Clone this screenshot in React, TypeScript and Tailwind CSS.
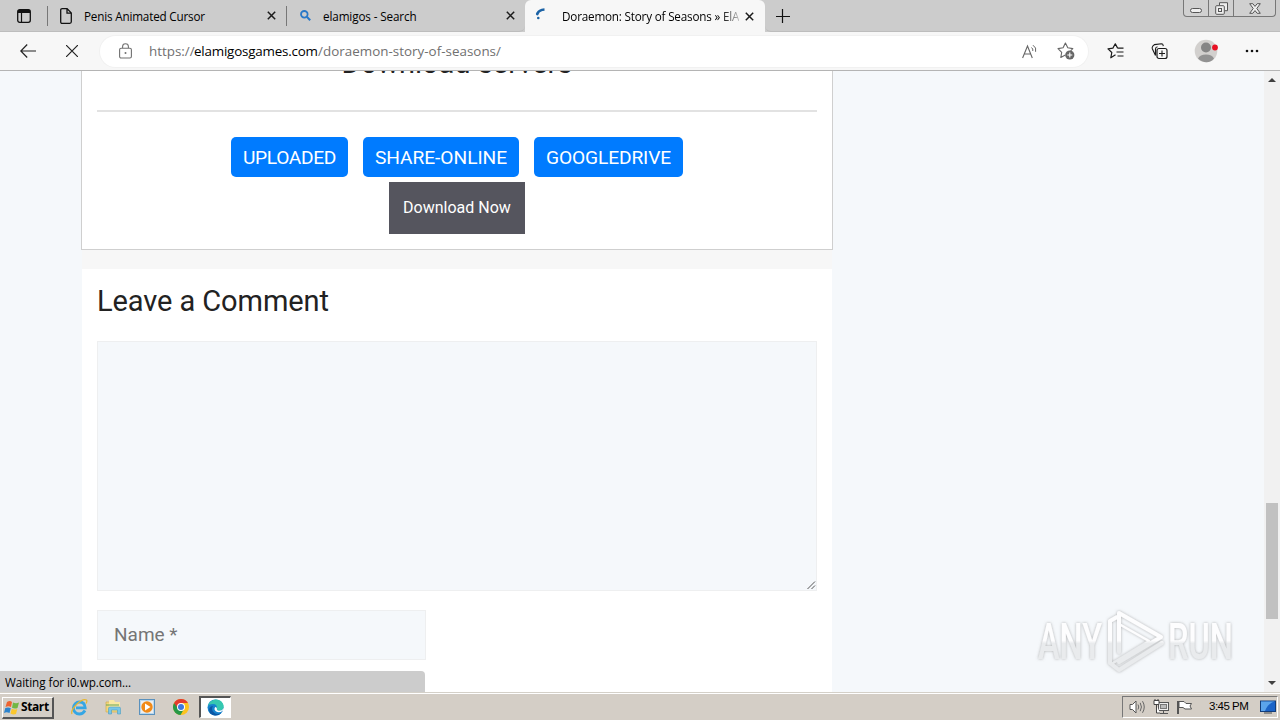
import type { ReactNode } from "react";

function Svg({ w, h, className = "", children }: { w: number; h: number; className?: string; children: ReactNode }) {
  return (
    <svg width={w} height={h} viewBox={`0 0 ${w} ${h}`} fill="none" className={`block shrink-0 ${className}`}>
      {children}
    </svg>
  );
}

function CloseX() {
  return (
    <Svg w={9} h={9}>
      <path d="M.8.8l7.4 7.4M8.2.8L.8 8.2" stroke="#1b1b1b" strokeWidth="1.5" />
    </Svg>
  );
}

function TabStrip() {
  return (
    <div className="flex h-8 shrink-0 bg-[#cccccc] text-[11.7px] leading-4 text-black">
      <div className="flex w-[47px] items-center border-b border-[#bdbdbd] pl-[17px]">
        <Svg w={14} h={14}>
          <rect x=".7" y=".7" width="12.6" height="12.6" rx="2" stroke="#111" strokeWidth="1.3" />
          <path d="M1 1h12v3H1z" fill="#111" />
          <path d="M4.5 4v9" stroke="#111" strokeWidth="1.2" />
        </Svg>
      </div>
      <div className="flex w-[239px] items-center border-b border-[#bdbdbd]">
        <div className="h-5 w-px bg-[#777]" />
        <Svg w={12} h={16} className="ml-3">
          <path d="M.7 2.2Q.7.7 2.2.7h4.9l4.2 4.2v8.9q0 1.5-1.5 1.5H2.2q-1.5 0-1.500-1.5zM7 .9v4.2h4.2" stroke="#111" strokeWidth="1.3" />
        </Svg>
        <span className="ml-3 w-[183px] whitespace-nowrap tracking-[-0.18px]">Penis Animated Cursor</span>
        <CloseX />
      </div>
      <div className="flex w-[239px] items-center rounded-br-md border-b border-[#bdbdbd]">
        <div className="h-5 w-px bg-[#777]" />
        <Svg w={11} h={11} className="ml-[13px]">
          <circle cx="4.3" cy="4.3" r="3.3" stroke="#2878c8" strokeWidth="1.8" />
          <path d="M6.8 6.8l3.4 3.4" stroke="#2878c8" strokeWidth="2" />
        </Svg>
        <span className="ml-3 w-[183px] whitespace-nowrap tracking-[-0.12px]">elamigos - Search</span>
        <CloseX />
      </div>
      <div className="flex w-60 items-center rounded-t-md bg-[#f7f7f7]">
        <Svg w={12} h={13} className="-mt-1 ml-[10px]">
          <path d="M9.5 1.5Q4 1.8 2.6 5.5" stroke="#1b62a5" strokeWidth="2.6" />
          <circle cx="2.3" cy="6" r="1.4" fill="#1b62a5" />
          <circle cx="3.3" cy="10" r="1.3" fill="#1b62a5" />
        </Svg>
        <span className="mr-[6px] ml-[15px] w-[177px] overflow-hidden whitespace-nowrap bg-linear-to-r from-black from-90% to-transparent to-103% bg-clip-text tracking-[-0.19px] text-transparent">
          Doraemon: Story of Seasons » ElA
        </span>
        <CloseX />
      </div>
      <div className="flex grow items-center rounded-bl-md border-b border-[#bdbdbd] pl-[11px]">
        <Svg w={14} h={14}>
          <path d="M0 7.5h14M6.5 0v14" stroke="#111" strokeWidth="1.2" />
        </Svg>
      </div>
      <div className="border-b border-[#bdbdbd] pr-1">
        <div className="flex h-[17px] w-[93px] rounded-b border border-t-0 border-[#777] bg-[#d0d0d0]">
          <div className="flex w-[25px] items-end justify-center border-r border-[#777] pb-[3px]">
            <div className="h-[5px] w-3 rounded-sm border border-[#555] bg-[#eee]" />
          </div>
          <div className="flex w-[25px] items-end justify-center border-r border-[#777] pb-px">
            <Svg w={13} h={13}>
              <path d="M4.5 3.500V.7h8v8H9.500" fill="#eee" stroke="#555" />
              <rect x=".7" y="3.700" width="8.600" height="8.600" rx="1" fill="#eee" stroke="#555" />
              <rect x="3.500" y="6.500" width="3" height="3" stroke="#555" />
            </Svg>
          </div>
          <div className="flex grow items-end justify-center pb-[2px]">
            <Svg w={12} h={11}>
              <path d="M.7.7h3.100L6 3.400 8.200.7h3.100L7.800 5.500l3.500 4.800H8.200L6 7.600l-2.200 2.700H.7l3.500-4.800z" fill="#eee" stroke="#555" />
            </Svg>
          </div>
        </div>
      </div>
    </div>
  );
}

function Toolbar() {
  return (
    <div className="flex h-[39px] shrink-0 items-center border-b border-[#b4b4b4] bg-[#f7f7f7]">
      <Svg w={16} h={14} className="ml-5">
        <path d="M7.200.5L.8 7l6.400 6.500M.8 7H16" stroke="#222" strokeWidth="1.200" />
      </Svg>
      <Svg w={12} h={12} className="ml-[30px]">
        <path d="M0 0l12 12M12 0L0 12" stroke="#222" strokeWidth="1.200" />
      </Svg>
      <div className="ml-[22px] flex h-[31px] w-[988px] items-center rounded-full bg-white shadow-[0_0_0_1px_#f1f1f1]">
        <Svg w={13} h={16} className="ml-[19px]">
          <rect x=".6" y="5.200" width="11.800" height="9.800" rx="1.500" stroke="#707070" strokeWidth="1.100" />
          <path d="M3.600 5V3.600a2.900 2.900 0 015.800 0V5" stroke="#707070" strokeWidth="1.100" />
          <circle cx="6.500" cy="10" r="1" fill="#707070" />
        </Svg>
        <div className="ml-[17px] flex w-[873px] whitespace-nowrap text-[13.4px] leading-5 text-[#707070]">
          <span className="w-[45px]">https://</span>
          <span className="w-[124px] tracking-[-0.2px] text-black">elamigosgames.com</span>
          <span className="tracking-[0.02px]">/doraemon-story-of-seasons/</span>
        </div>
        <Svg w={16} h={15}>
          <path d="M.6 14L5.500 2l4.800 12M2.300 10h6.300" stroke="#666" strokeWidth="1.100" />
          <path d="M9.500 3.500q1.800 1.300 1.300 3.500M11 1.200q3.800 2.400 2.600 6.600" stroke="#666" />
        </Svg>
        <Svg w={18} h={18} className="ml-[19px]">
          <path d="M8.300 13l-4.500 2.500.9-5.200L1 6.600l5.100-.8L8.400 1l2.400 4.800 5 .8-2.200 2.300" stroke="#666" strokeWidth="1.100" strokeLinejoin="round" />
          <circle cx="12.800" cy="13" r="4.600" fill="#666" />
          <path d="M10.300 13h5M12.800 10.500v5" stroke="#fff" strokeWidth="1.100" />
        </Svg>
      </div>
      <Svg w={17} h={17} className="ml-[19px]">
        <path d="M8.500 11.800l-4.700 3 1-5.300L1 5.900l4.900-.8L8.300.8l2.300 4.300M10.600 5.100h5.900M9.500 9h7M10.500 13h6" stroke="#1b1b1b" strokeWidth="1.200" strokeLinejoin="round" />
      </Svg>
      <Svg w={17} h={17} className="ml-[27px]">
        <rect x="6" y="5.500" width="10" height="10" rx="2" stroke="#1b1b1b" strokeWidth="1.200" />
        <path d="M8 10.500h6M11 7.500v6M4.500 12.500L1.300 5.800Q.8 4.500 1.800 3L3.500 1.600 10.500.8q1.500 0 1.600 1.500l.2.900M4.500 12.500V6q0-2 2-2.300" stroke="#1b1b1b" strokeWidth="1.100" />
      </Svg>
      <Svg w={24} h={24} className="ml-[26px]">
        <circle cx="12" cy="12" r="11.300" fill="#d2d0ce" />
        <circle cx="12" cy="8.500" r="5" fill="#858585" />
        <path d="M4 19.500Q6 15.500 12 15.500t8 4Q17 23.300 12.500 23.300T4 19.500z" fill="#929292" />
        <circle cx="21" cy="8.500" r="2.900" fill="#e81123" />
      </Svg>
      <Svg w={14} h={4} className="ml-[27px]">
        <circle cx="2" cy="2" r="1.300" fill="#111" />
        <circle cx="7" cy="2" r="1.300" fill="#111" />
        <circle cx="12" cy="2" r="1.300" fill="#111" />
      </Svg>
    </div>
  );
}

function Page() {
  return (
    <main className="relative flex min-h-0 grow overflow-hidden bg-[#f5f8fb] font-[Roboto,sans-serif]">
      <div className="ml-[81px] w-[752px]">
        <section className="flex h-[179px] flex-col items-center border border-t-0 border-[#cfcfcf] bg-white px-[15px]">
          <h2 className="-mt-[25px] h-16 text-[29px] leading-[34px] text-[#222]">Download servers</h2>
          <div className="h-[2px] w-full shrink-0 bg-[#e2e2e2]" />
          <div className="mt-[25px] flex gap-[15px] text-[19.2px] leading-[39px] text-white">
            <button className="h-10 w-[117px] rounded-[5px] bg-[#007bff] tracking-[-0.35px]">UPLOADED</button>
            <button className="h-10 w-[156px] rounded-[5px] bg-[#007bff] tracking-[-0.05px]">SHARE-ONLINE</button>
            <button className="h-10 w-[149px] rounded-[5px] bg-[#007bff] tracking-[-0.13px]">GOOGLEDRIVE</button>
          </div>
          <button className="mt-[5px] h-[52px] w-[136px] shrink-0 bg-[#55555e] text-[16px] text-white">Download Now</button>
        </section>
        <div className="mx-px h-[19px] bg-[#f7f7f7]" />
        <section className="mx-px h-[440px] bg-white px-[15px] pt-[15px]">
          <h3 className="h-[57px] text-[29px] leading-[34px] tracking-[-0.08px] text-[#222]">Leave a Comment</h3>
          <div className="flex h-[250px] items-end justify-end border border-[#eeeff0] bg-[#f5f8fb]">
            <Svg w={9} h={9}>
              <path d="M.5 8L8 .5M4.500 8L8 4.500" stroke="#555" />
            </Svg>
          </div>
          <div className="mt-[19px] flex h-[50px] w-[329px] items-center border border-[#eeeff0] bg-[#f5f8fb] pt-px pl-4 text-[19px] text-[#757575]">
            Name *
          </div>
        </section>
      </div>
      <div className="ml-auto flex w-4 flex-col items-center bg-[#f1f1f1]">
        <Svg w={8} h={4} className="mt-[7px]">
          <path d="M0 4l4-4 4 4z" fill="#404040" />
        </Svg>
        <div className="mt-[421px] h-[116px] w-3 bg-[#c1c1c1]" />
        <Svg w={8} h={4} className="mt-[62px]">
          <path d="M0 0l4 4 4-4z" fill="#404040" />
        </Svg>
      </div>
      <div className="absolute bottom-0 left-0 h-[21px] w-[425px] rounded-tr bg-[#cccccc] pl-[5px] font-['Open_Sans','Noto_Sans',sans-serif] text-[11.7px] leading-[22px] tracking-[-0.05px] text-black">
        Waiting for i0.wp.com...
      </div>
      <div className="absolute right-[41px] bottom-[14px]">
        <Svg w={204} h={72}>
          <defs>
            <linearGradient id="mark" x1="0" y1="0" x2="0" y2="72" gradientUnits="userSpaceOnUse">
              <stop offset=".48" stopColor="#fdfdfe" />
              <stop offset=".52" stopColor="#e9ebed" />
            </linearGradient>
            <filter id="glow" x="-10%" y="-10%" width="120%" height="120%">
              <feDropShadow dx="0" dy="0" stdDeviation="1.800" floodColor="#888" floodOpacity=".65" />
            </filter>
          </defs>
          <g filter="url(#glow)" fill="url(#mark)" fontFamily="Roboto, sans-serif" fontWeight="500" fontSize="50">
            <text x="3" y="53" textLength="64" lengthAdjust="spacingAndGlyphs">ANY</text>
            <text x="133" y="53" textLength="65" lengthAdjust="spacingAndGlyphs">RUN</text>
            <g fill="none" stroke="url(#mark)" strokeWidth="4" strokeLinejoin="round" strokeLinecap="round">
              <path d="M82 11l-7 4v42l9 7 43-27M84 46V7l42 24-42 25" />
              <path d="M84 18l30 17-36 22" strokeWidth="2.500" />
            </g>
          </g>
        </Svg>
      </div>
    </main>
  );
}

function Taskbar() {
  return (
    <footer className="flex h-7 shrink-0 items-center border-t border-[#d4d0c8] bg-[#d4cec6] text-black shadow-[inset_0_1px_0_#fff]">
      <div className="mt-[2px] ml-[2px] flex h-[22px] w-[52px] items-center border-t border-r-2 border-b-2 border-l border-t-white border-r-[#555] border-b-[#555] border-l-white text-xs font-bold">
        <Svg w={16} h={15} className="ml-px">
          <path d="M3 2q3-2 5 0L7 7Q4.500 5.500 1.500 7z" fill="#ed6330" />
          <path d="M9 2.500q3 1.500 6 0L13.500 8q-3 1.200-5.500-.3z" fill="#72b744" />
          <path d="M1.300 8q3-1.200 5.500.2L5.500 13q-3-1.300-5.500 0z" fill="#2c83cd" />
          <path d="M7.800 8.700q2.500 1.300 5.500.2L12 14q-3 1-5.500-.6z" fill="#fbc72d" />
        </Svg>
        <span className="ml-px tracking-[-0.4px]">Start</span>
      </div>
      <Svg w={17} h={17} className="mt-px ml-[17px]">
        <path d="M14 11.500Q12 15 8.300 15A6 6 0 118.500 3q5.300 0 5.700 5.800H5" stroke="#35a6e4" strokeWidth="2.800" />
        <path d="M1 15Q-.5 11.500 5.500 5.500T15.500 1Q16.500 2 15 4.500" stroke="#e6b62f" strokeWidth="1.200" />
      </Svg>
      <Svg w={17} h={16} className="mt-px ml-[17px]">
        <path d="M1 3h5l1 1h7v9H1z" fill="#f1d77e" stroke="#d2ae4d" strokeWidth=".7" />
        <path d="M4 1h5l1 2h5v5H4z" fill="#f9e8a2" />
        <path d="M3.500 15V9.500q0-1.500 1.500-1.500h9q1.500 0 1.500 1.500V15h-3v-4h-6v4z" fill="#78c6e8" stroke="#4c9dc1" strokeWidth=".6" />
        <path d="M1 6h13" stroke="#69a756" />
      </Svg>
      <Svg w={16} h={16} className="mt-px ml-[17px]">
        <rect x=".5" y=".5" width="15" height="15" fill="#b9d8ee" stroke="#5a91bd" />
        <rect x="2" y="2" width="12" height="12" fill="#eee" />
        <circle cx="8" cy="8" r="5.700" fill="#f18a17" />
        <path d="M6 4.500L11.500 8 6 11.500z" fill="#fff" />
      </Svg>
      <Svg w={16} h={16} className="mt-px ml-[18px]">
        <circle cx="8" cy="8" r="8" fill="#fcc31e" />
        <path d="M8 8L1.070 4A8 8 0 007.500 16l3.500-6z" fill="#279847" />
        <path d="M1.070 4A8 8 0 0114.930 4H8L5 9.500z" fill="#e33b2e" />
        <circle cx="8" cy="8" r="4" fill="#fff" />
        <circle cx="8" cy="8" r="3" fill="#3d78df" />
      </Svg>
      <div className="mt-px ml-[10px] flex h-[22px] w-8 items-center justify-center border-t-2 border-r border-b border-l-2 border-t-[#555] border-r-white border-b-white border-l-[#555] bg-white">
        <Svg w={17} h={17} className="-ml-px">
          <circle cx="8.500" cy="8.500" r="8" fill="#1582ce" />
          <path d="M.7 7Q3 .5 9 .5q6 0 7.700 6 .2 5-4.700 5.300-3 0-2.200-2.200Q10.500 5 6 5 2 5 .7 7z" fill="#35c8b0" />
          <path d="M6 7Q3.500 11 7.500 14q3 2 7-.3-2.500 3.400-7 2.800Q1.500 15 2.200 10 3 7 6 7z" fill="#0c57a4" />
          <path d="M8.200 8Q6.500 10.300 8.800 12.300q3 2.200 6.700-.3 1-1 1-2.500-1.500 2.200-4.500 2.200-2.700-.3-2-2Q9.800 8 8.200 8z" fill="#fff" />
        </Svg>
      </div>
      <div className="mt-px mr-[2px] ml-auto flex h-[22px] w-[156px] items-center border border-t-[#777] border-r-white border-b-white border-l-[#777] text-xs">
        <Svg w={17} h={14} className="ml-[6px]">
          <path d="M1 4.500h2.500L7 1v12L3.500 9.500H1z" fill="#fff" stroke="#555" />
          <path d="M9 4.500q1.500 2.500 0 5M11.200 2.800q2.500 4.200 0 8.400M13.500 1.200q3.500 5.800 0 11.600" stroke="#666" />
        </Svg>
        <Svg w={17} h={16} className="ml-[7px]">
          <rect x="5.500" y="3.500" width="10" height="8" fill="#eee" stroke="#555" />
          <rect x="7.500" y="5.500" width="6" height="4" fill="#bbb" stroke="#777" />
          <path d="M7 14.500h8M10.500 12v2" stroke="#555" />
          <path d="M1 1.500h5v4H1zM2 0v2M5 0v2M3.500 6v8H7" fill="#fff" stroke="#444" />
        </Svg>
        <Svg w={17} h={15} className="ml-[6px]">
          <path d="M2 1v13" stroke="#555" strokeWidth="2" />
          <path d="M3 1.500h5l2 2h5.500L14 6l1.500 3H9L7 7.500H3z" fill="#fff" stroke="#555" />
        </Svg>
        <span className="ml-[16px] w-[51px] whitespace-nowrap font-['Liberation_Sans',sans-serif] text-[11.5px] tracking-[-0.5px]">3:45 PM</span>
        <Svg w={16} h={14}>
          <rect x=".5" y="1" width="15" height="10.500" fill="#1c64c8" stroke="#123d7b" />
          <path d="M1 1.500h14Q8 3 5 11H1z" fill="#5ba4ec" />
          <path d="M4 13h8" stroke="#777" strokeWidth="1.500" />
        </Svg>
      </div>
    </footer>
  );
}

export default function App() {
  return (
    <div className="flex h-[720px] w-[1280px] flex-col overflow-hidden font-['Open_Sans','Noto_Sans',sans-serif]">
      <TabStrip />
      <Toolbar />
      <Page />
      <Taskbar />
    </div>
  );
}
